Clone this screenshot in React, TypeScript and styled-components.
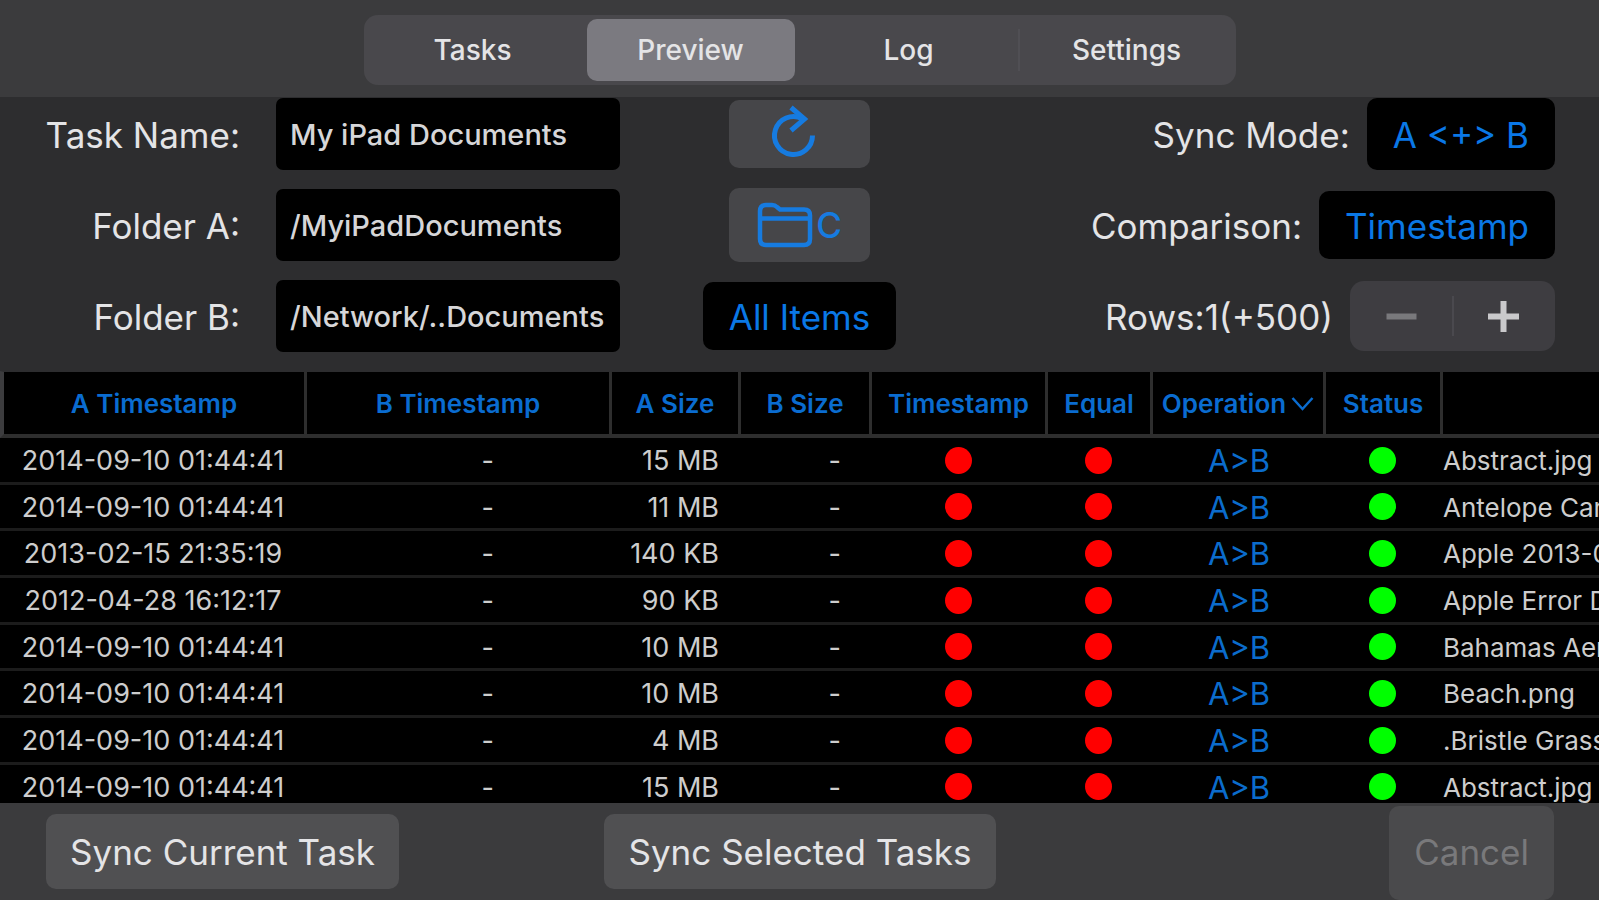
import React, { useState } from "react";
import styled, { createGlobalStyle } from "styled-components";

const GlobalStyle = createGlobalStyle`
  *, *::before, *::after { box-sizing: border-box; }
  body { margin: 0; background: #3b3b3d; }
  button, input { font: inherit; color: inherit; border: 0; margin: 0; }
`;

const Screen = styled.div`
  display: flex;
  flex-direction: column;
  height: 100vh;
  overflow: hidden;
  background: #3b3b3d;
  color: #e4e4e6;
  font-family: Inter, "Liberation Sans", sans-serif;
  font-size: 35px;
  line-height: 42px;
  white-space: nowrap;
`;

const TopBar = styled.header`
  flex: none;
  display: flex;
  justify-content: center;
  padding: 15px 0 12px;
`;

const Segments = styled.div`
  display: grid;
  grid-template-columns: repeat(4, 1fr);
  width: 100%;
  max-width: 872px;
  height: 70px;
  padding: 4px 0;
  border-radius: 14px;
  background: #49484c;
`;

const Segment = styled.button<{ $divided?: boolean }>`
  position: relative;
  margin: 0 5px;
  padding: 0;
  border-radius: 10px;
  background: transparent;
  font-size: 28px;
  font-weight: 500;
  line-height: 34px;

  &[aria-selected="true"] {
    background: #7b7a80;
  }

  &::before {
    content: "";
    display: ${(p) => (p.$divided ? "block" : "none")};
    position: absolute;
    left: -5px;
    top: 10px;
    bottom: 10px;
    width: 2px;
    background: #504f54;
  }
`;

const TaskForm = styled.section`
  flex: none;
  display: grid;
  grid-template-columns: 1fr auto 1fr;
  padding: 1px 44px 19px 0;
  background: #2d2d2f;
`;

const Column = styled.div<{ $align: "start" | "center" | "end" }>`
  display: grid;
  grid-auto-rows: 72px;
  row-gap: 19px;
  align-items: center;
  justify-items: ${(p) => p.$align};
  padding-left: ${(p) => (p.$align === "center" ? "44px" : "0")};
`;

const FieldRow = styled.div`
  display: flex;
  align-items: center;
`;

const FieldLabel = styled.label`
  width: 276px;
  padding: 2px 36px 0 0;
  text-align: right;
`;

const Field = styled.input`
  width: 344px;
  height: 72px;
  padding: 0 14px;
  border-radius: 7px;
  background: #000;
  font-size: 29px;
  font-weight: 500;
  color: #d6d6d8;
`;

const IconButton = styled.button<{ $tall?: boolean }>`
  display: flex;
  align-items: center;
  justify-content: center;
  gap: 3px;
  width: 141px;
  height: ${(p) => (p.$tall ? "74px" : "68px")};
  padding: 0;
  border-radius: 10px;
  background: #464649;
  color: #167be0;
  font-weight: 500;
`;

const ChoiceButton = styled.button<{ $tall?: boolean }>`
  height: ${(p) => (p.$tall ? "72px" : "68px")};
  padding: 2px 26px 0;
  border-radius: 10px;
  background: #000;
  color: #0a78e6;
`;

const OptionRow = styled.div`
  display: flex;
  align-items: center;
  gap: 17px;
`;

const OptionLabel = styled.label`
  padding-top: 2px;
`;

const Stepper = styled.div`
  display: grid;
  grid-template-columns: 1fr 1fr;
  width: 205px;
  height: 70px;
  border-radius: 14px;
  background: #3e3d41;
`;

const StepButton = styled.button`
  position: relative;
  display: flex;
  align-items: center;
  justify-content: center;
  padding: 0;
  background: transparent;
  color: #c9c9cb;

  &:disabled { color: #79797c; }

  & + &::before {
    content: "";
    position: absolute;
    left: -1px;
    top: 15px;
    bottom: 15px;
    width: 2px;
    background: #4a494e;
  }
`;

const TableArea = styled.main`
  flex: 1;
  min-height: 0;
  overflow: hidden;
  background: #000;
`;

const ItemTable = styled.table`
  width: 100%;
  table-layout: fixed;
  border-collapse: separate;
  border-spacing: 0;
  font-size: 27px;
  line-height: 32px;
`;

const Col = styled.col<{ $w?: number }>`
  width: ${(p) => (p.$w ? `${p.$w}px` : "auto")};
`;

const HeadCell = styled.th`
  height: 67px;
  padding: 2px 0 0;
  border-top: 1px solid #2d2d2f;
  border-bottom: 4px solid #2e2e2e;
  border-right: 3px solid #2e2e2e;
  font-size: 26px;
  font-weight: 600;
  color: #0a6cd0;

  &:first-child { border-left: 4px solid #3c3c3e; }
  &:last-child { border-right: 0; }
`;

const SortButton = styled.button`
  display: inline-flex;
  align-items: center;
  gap: 5px;
  padding: 0;
  background: transparent;
`;

const Row = styled.tr`
  height: 47px;
  &:nth-child(3n + 2) { height: 46px; }
`;

const Cell = styled.td<{ $align?: "left" | "right"; $inset?: number }>`
  padding: 2px ${(p) => p.$inset ?? 1}px 0 0;
  border-bottom: 3px solid #1c1c1c;
  text-align: ${(p) => p.$align ?? "center"};
  vertical-align: middle;
  color: #cdcdcd;
`;

const DotCell = styled(Cell)`
  padding: 0 4px 0 0;
`;

const NameCell = styled(Cell)`
  overflow: hidden;
  font-size: 26px;
`;

const Action = styled.button`
  display: block;
  margin: 0 auto;
  padding: 0;
  background: transparent;
  font-size: 31px;
  line-height: 32px;
  color: #0b6ccc;
`;

const Dot = styled.span<{ $ok?: boolean }>`
  display: block;
  width: 27px;
  height: 27px;
  margin: 0 auto;
  border-radius: 50%;
  background: ${(p) => (p.$ok ? "#00ff00" : "#ff0000")};
`;

const BottomBar = styled.footer`
  flex: none;
  display: grid;
  grid-template-columns: 1fr auto 1fr;
  align-items: start;
  height: 97px;
  padding: 3px 45px 0 46px;
  background: #3b3b3d;
`;

const BarButton = styled.button`
  height: 75px;
  margin-top: 8px;
  padding: 0 24px;
  border-radius: 10px;
  background: #505052;
  justify-self: start;
`;

const CancelButton = styled(BarButton)`
  height: 94px;
  margin-top: 0;
  padding: 0 25px 3px;
  justify-self: end;
  background: #4a4a4c;
  color: #79797b;
`;

const RefreshIcon = () => (
  <svg width="60" height="68" viewBox="0 0 60 68" fill="none" stroke="currentColor" strokeWidth="5" aria-hidden="true">
    <path d="M43.5 35.5A19 19 0 1 1 33 18.5" />
    <path d="M22 7.5L35.5 19L22 30.5" />
  </svg>
);

const FolderIcon = () => (
  <svg width="56" height="46" viewBox="0 0 56 46" fill="none" stroke="currentColor" strokeWidth="4.5" aria-hidden="true">
    <path d="M3 37V9Q3 3 9 3H15Q18 3 20 5L23 7.500H47Q53 7.500 53 13.500V37Q53 43 47 43H9Q3 43 3 37Z" />
    <path d="M3 16.500H53" />
  </svg>
);

const Chevron = () => (
  <svg width="23" height="16" viewBox="0 0 23 16" fill="none" stroke="currentColor" strokeWidth="2.5" aria-hidden="true">
    <path d="M1.500 2L11.500 13L21.500 2" />
  </svg>
);

const MinusIcon = () => (
  <svg width="31" height="31" viewBox="0 0 31 31" stroke="currentColor" strokeWidth="6" aria-hidden="true">
    <path d="M0.500 15.500H30.500" />
  </svg>
);

const PlusIcon = () => (
  <svg width="31" height="31" viewBox="0 0 31 31" stroke="currentColor" strokeWidth="6" aria-hidden="true">
    <path d="M0 15.500H31M15.500 0V31" />
  </svg>
);

const TABS = ["Tasks", "Preview", "Log", "Settings"];

const FIELDS = [
  { id: "task-name", label: "Task Name:", value: "My iPad Documents" },
  { id: "folder-a", label: "Folder A:", value: "/MyiPadDocuments" },
  { id: "folder-b", label: "Folder B:", value: "/Network/..Documents" },
];

const HEADS = ["A Timestamp", "B Timestamp", "A Size", "B Size", "Timestamp", "Equal", "Operation", "Status", ""];
const WIDTHS = [307, 305, 129, 131, 176, 105, 173, 117];

const ITEMS = [
  ["2014-09-10 01:44:41", "15 MB", "Abstract.jpg"],
  ["2014-09-10 01:44:41", "11 MB", "Antelope Canyon.jpg"],
  ["2013-02-15 21:35:19", "140 KB", "Apple 2013-02-15.png"],
  ["2012-04-28 16:12:17", "90 KB", "Apple Error Dialog.png"],
  ["2014-09-10 01:44:41", "10 MB", "Bahamas Aerial.jpg"],
  ["2014-09-10 01:44:41", "10 MB", "Beach.png"],
  ["2014-09-10 01:44:41", "4 MB", ".Bristle Grass.jpg"],
  ["2014-09-10 01:44:41", "15 MB", "Abstract.jpg"],
];

export default function App() {
  const [tab, setTab] = useState("Preview");

  return (
    <Screen>
      <GlobalStyle />
      <TopBar>
        <Segments role="tablist">
          {TABS.map((name) => (
            <Segment
              key={name}
              role="tab"
              aria-selected={name === tab}
              $divided={name === "Settings"}
              onClick={() => setTab(name)}
            >
              {name}
            </Segment>
          ))}
        </Segments>
      </TopBar>

      <TaskForm>
        <Column $align="start">
          {FIELDS.map((f) => (
            <FieldRow key={f.id}>
              <FieldLabel htmlFor={f.id}>{f.label}</FieldLabel>
              <Field id={f.id} defaultValue={f.value} />
            </FieldRow>
          ))}
        </Column>
        <Column $align="center">
          <IconButton aria-label="Refresh"><RefreshIcon /></IconButton>
          <IconButton $tall><FolderIcon />C</IconButton>
          <ChoiceButton>All Items</ChoiceButton>
        </Column>
        <Column $align="end">
          <OptionRow>
            <OptionLabel htmlFor="sync-mode">Sync Mode:</OptionLabel>
            <ChoiceButton id="sync-mode" $tall>A &lt;+&gt; B</ChoiceButton>
          </OptionRow>
          <OptionRow>
            <OptionLabel htmlFor="comparison">Comparison:</OptionLabel>
            <ChoiceButton id="comparison">Timestamp</ChoiceButton>
          </OptionRow>
          <OptionRow>
            <OptionLabel as="span">Rows:1(+500)</OptionLabel>
            <Stepper>
              <StepButton aria-label="Fewer rows" disabled><MinusIcon /></StepButton>
              <StepButton aria-label="More rows"><PlusIcon /></StepButton>
            </Stepper>
          </OptionRow>
        </Column>
      </TaskForm>

      <TableArea>
        <ItemTable>
          <colgroup>
            {WIDTHS.map((w, i) => <Col key={i} $w={w} />)}
            <Col />
          </colgroup>
          <thead>
            <tr>
              {HEADS.map((h) => (
                <HeadCell key={h} scope="col">
                  {h && <SortButton>{h}{h === "Operation" && <Chevron />}</SortButton>}
                </HeadCell>
              ))}
            </tr>
          </thead>
          <tbody>
            {ITEMS.map(([time, size, name], i) => (
              <Row key={i}>
                <Cell>{time}</Cell>
                <Cell $align="right" $inset={118}>-</Cell>
                <Cell $align="right" $inset={22}>{size}</Cell>
                <Cell $align="right" $inset={31}>-</Cell>
                <DotCell><Dot /></DotCell>
                <DotCell><Dot /></DotCell>
                <Cell><Action>A&gt;B</Action></Cell>
                <DotCell><Dot $ok /></DotCell>
                <NameCell $align="left">{name}</NameCell>
              </Row>
            ))}
          </tbody>
        </ItemTable>
      </TableArea>

      <BottomBar>
        <BarButton>Sync Current Task</BarButton>
        <BarButton>Sync Selected Tasks</BarButton>
        <CancelButton disabled>Cancel</CancelButton>
      </BottomBar>
    </Screen>
  );
}
